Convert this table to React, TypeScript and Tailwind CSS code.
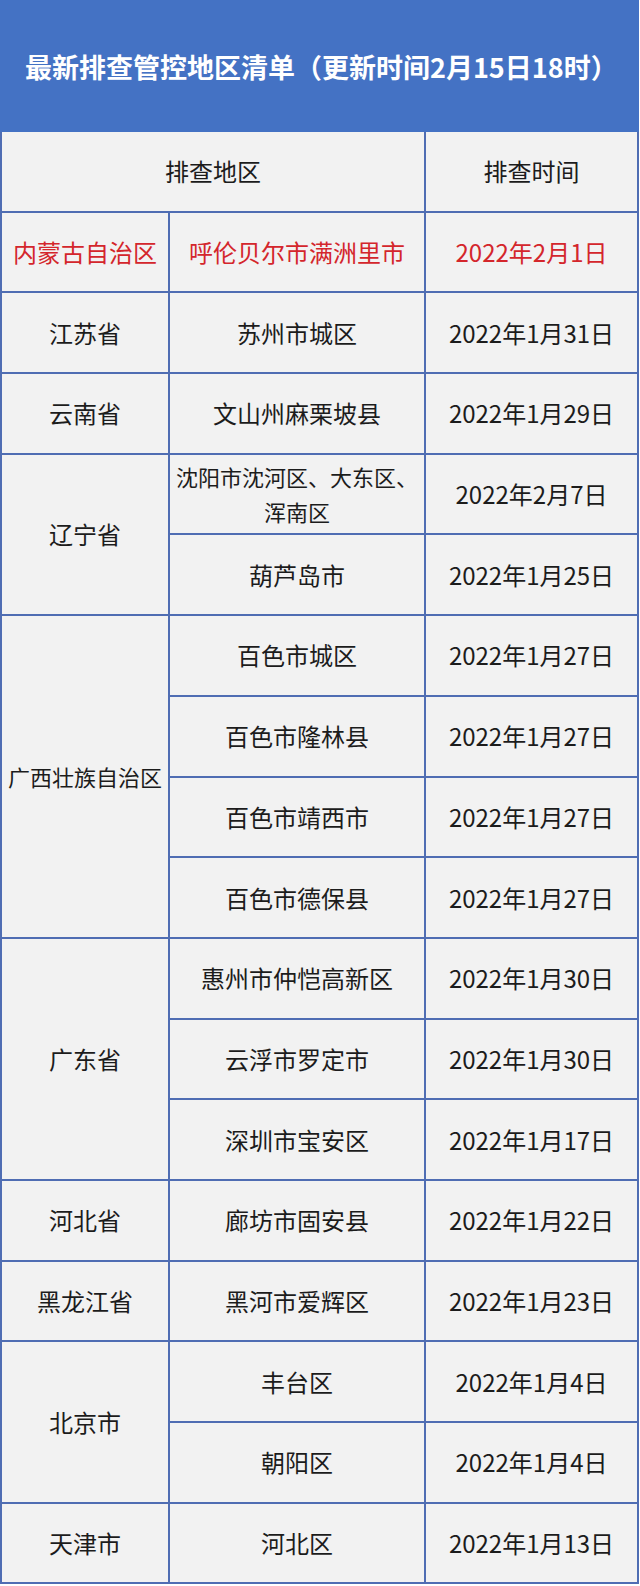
import React from "react";

type Row = { a?: { text: string; span?: number }; b: React.ReactNode; c: string; red?: boolean; small?: boolean };

const rows: Row[] = [
  { a: { text: "内蒙古自治区" }, b: "呼伦贝尔市满洲里市", c: "2022年2月1日", red: true },
  { a: { text: "江苏省" }, b: "苏州市城区", c: "2022年1月31日" },
  { a: { text: "云南省" }, b: "文山州麻栗坡县", c: "2022年1月29日" },
  { a: { text: "辽宁省", span: 2 }, b: "沈阳市沈河区、大东区、", c: "2022年2月7日", small: true },
  { b: "葫芦岛市", c: "2022年1月25日" },
  { a: { text: "广西壮族自治区", span: 4 }, b: "百色市城区", c: "2022年1月27日" },
  { b: "百色市隆林县", c: "2022年1月27日" },
  { b: "百色市靖西市", c: "2022年1月27日" },
  { b: "百色市德保县", c: "2022年1月27日" },
  { a: { text: "广东省", span: 3 }, b: "惠州市仲恺高新区", c: "2022年1月30日" },
  { b: "云浮市罗定市", c: "2022年1月30日" },
  { b: "深圳市宝安区", c: "2022年1月17日" },
  { a: { text: "河北省" }, b: "廊坊市固安县", c: "2022年1月22日" },
  { a: { text: "黑龙江省" }, b: "黑河市爱辉区", c: "2022年1月23日" },
  { a: { text: "北京市", span: 2 }, b: "丰台区", c: "2022年1月4日" },
  { b: "朝阳区", c: "2022年1月4日" },
  { a: { text: "天津市" }, b: "河北区", c: "2022年1月13日" },
];

const spanClass: Record<number, string> = {
  1: "",
  2: "row-span-2",
  3: "row-span-3",
  4: "row-span-4",
};

export default function App() {
  return (
    <div className="w-[640px] h-[1586px] bg-white font-['Noto_Sans_CJK_SC',sans-serif]">
      <div className="w-[639px] h-[132px] bg-[#4472c4] flex items-center pl-[25px]">
        <h1 className="text-white font-bold text-[27px] leading-none tracking-[0px]">
          最新排查管控地区清单（更新时间2月15日18时）
        </h1>
      </div>
      <div className="w-[639px] bg-[#4f6db3] grid grid-cols-[166px_254px_1fr] grid-rows-[repeat(18,78.7px)] gap-[2px] px-[2px] pb-[2px] text-[24px] text-[#1c1c1c]">
        <div className="col-span-2 bg-[#f2f2f2] flex items-center justify-center">排查地区</div>
        <div className="bg-[#f2f2f2] flex items-center justify-center">排查时间</div>
        {rows.map((r, i) => (
          <React.Fragment key={i}>
            {r.a && (
              <div
                className={`${spanClass[r.a.span ?? 1]} bg-[#f2f2f2] flex items-center justify-center ${
                  r.a.text.length >= 7 ? "text-[22px]" : ""
                } ${r.red ? "text-[#d4262c]" : ""}`}
              >
                {r.a.text}
              </div>
            )}
            <div
              className={`bg-[#f2f2f2] flex items-center justify-center text-center ${
                r.red ? "text-[#d4262c]" : ""
              }`}
            >
              {r.small ? (
                <span className="text-[22px] leading-[35px]">
                  沈阳市沈河区、大东区、
                  <br />
                  浑南区
                </span>
              ) : (
                r.b
              )}
            </div>
            <div className={`bg-[#f2f2f2] flex items-center justify-center ${r.red ? "text-[#d4262c]" : ""}`}>
              {r.c}
            </div>
          </React.Fragment>
        ))}
      </div>
    </div>
  );
}
